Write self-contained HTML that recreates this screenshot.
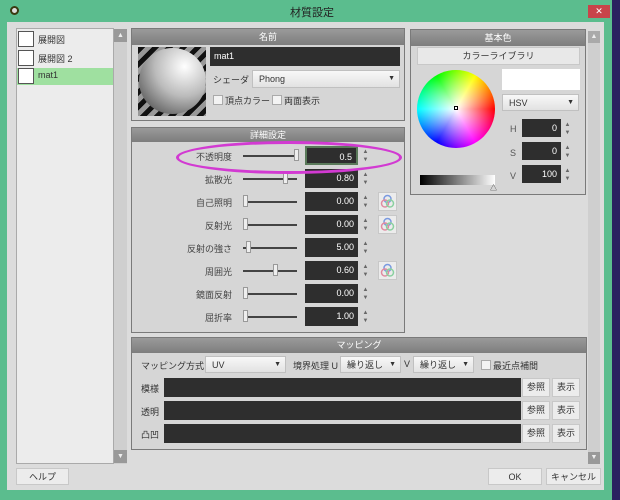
<!DOCTYPE html><html><head><meta charset="utf-8"><style>
*{box-sizing:border-box;margin:0;padding:0}
body{width:620px;height:500px;overflow:hidden;background:#5bbd8e;font-family:"Liberation Sans","Noto Sans CJK JP",sans-serif;font-size:9px;color:#333;position:relative}
.a{position:absolute}
.win{left:7px;top:22px;width:597px;height:468px;background:#dcdcdc}
.hdr{background:linear-gradient(#9a9a9a,#7d7d7d);color:#fff;text-align:center;height:16px;line-height:16px;font-size:9px}
.pan{background:#d6d6d6;border:1px solid #7a7a7a}
.dk{background:#2e2e2e;color:#fff;text-align:right;padding-right:4px;font-size:9px;line-height:18px}
.sl{height:2px;background:#444}
.th{width:5px;height:12px;background:#eee;border:1px solid #999}
.sp{color:#666;font-size:6px;line-height:8px;width:9px;text-align:center}
.btn{background:#ececec;border:1px solid #c8c8c8;text-align:center;line-height:16px}
.cb{width:10px;height:10px;background:#f3f3f3;border:1px solid #aaa}
.sel{background:linear-gradient(#f8f8f8,#e2e2e2);border:1px solid #c0c0c0;line-height:16px;padding-left:6px}
.sel:after{content:"▼";position:absolute;right:4px;font-size:7px;color:#333}
.lbl{text-align:right;width:90px;color:#444}
</style></head><body>
<div class="a" style="left:612px;top:0;width:8px;height:500px;background:#2a2060"></div>
<div class="a" style="left:10px;top:6px;width:9px;height:9px;border-radius:50%;background:#ddd;border:2px solid #3a3a10"></div>
<div class="a" style="left:290px;top:4px;font-size:11px;color:#222">材質設定</div>
<div class="a" style="left:588px;top:5px;width:22px;height:13px;background:#c8444a;color:#fff;text-align:center;line-height:13px;font-size:9px">✕</div>
<div class="a win"></div>
<div class="a" style="left:16px;top:28px;width:98px;height:436px;background:#ececec;border:1px solid #aaa"></div>
<div class="a" style="left:17px;top:68px;width:96px;height:17px;background:#9fe0a0"></div>
<div class="a" style="left:18px;top:31px;width:16px;height:16px;background:#fff;border:1px solid #555"></div>
<div class="a" style="left:38px;top:33px">展開図</div>
<div class="a" style="left:18px;top:50px;width:16px;height:16px;background:#fff;border:1px solid #555"></div>
<div class="a" style="left:38px;top:52px">展開図 2</div>
<div class="a" style="left:18px;top:68px;width:16px;height:16px;background:#fff;border:1px solid #555"></div>
<div class="a" style="left:38px;top:70px">mat1</div>
<div class="a" style="left:114px;top:29px;width:13px;height:435px;background:#cfcfcf"></div>
<div class="a" style="left:114px;top:29px;width:13px;height:13px;background:#999;color:#eee;font-size:7px;text-align:center;line-height:13px">▲</div>
<div class="a" style="left:114px;top:450px;width:13px;height:13px;background:#999;color:#eee;font-size:7px;text-align:center;line-height:13px">▼</div>
<div class="a pan" style="left:131px;top:28px;width:274px;height:93px"><div class="hdr">名前</div></div>
<div class="a" style="left:138px;top:47px;width:68px;height:69px;background:repeating-linear-gradient(135deg,#111 0 5px,#999 5px 10px)"></div>
<div class="a" style="left:139px;top:48px;width:67px;height:66px;border-radius:50%;background:radial-gradient(circle at 68% 28%,#fff,#bbb 45%,#444 95%)"></div>
<div class="a dk" style="left:210px;top:47px;width:190px;height:19px;text-align:left;padding-left:4px">mat1</div>
<div class="a" style="left:213px;top:73px">シェーダ</div>
<div class="a sel" style="left:252px;top:70px;width:148px;height:18px">Phong</div>
<div class="a cb" style="left:213px;top:95px"></div><div class="a" style="left:225px;top:94px">頂点カラー</div>
<div class="a cb" style="left:272px;top:95px"></div><div class="a" style="left:284px;top:94px">両面表示</div>
<div class="a pan" style="left:131px;top:127px;width:274px;height:206px"><div class="hdr" style="height:14px;line-height:14px">詳細設定</div></div>
<div id="rows"></div>
<div class="a pan" style="left:410px;top:29px;width:176px;height:166px"><div class="hdr">基本色</div></div>
<div class="a btn" style="left:417px;top:47px;width:163px;height:18px;background:#e8e8e8">カラーライブラリ</div>
<div class="a" style="left:417px;top:70px;width:78px;height:78px;border-radius:50%;background:radial-gradient(circle,#fff 0%,rgba(255,255,255,0) 70%),conic-gradient(from 90deg,#f00,#f0f,#00f,#0ff,#0f0,#ff0,#f00)"></div>
<div class="a" style="left:454px;top:106px;width:4px;height:4px;border:1px solid #000;background:#fff"></div>
<div class="a" style="left:502px;top:69px;width:78px;height:21px;background:#fff"></div>
<div class="a sel" style="left:502px;top:94px;width:77px;height:17px">HSV</div>
<div class="a" style="left:420px;top:175px;width:75px;height:10px;background:linear-gradient(90deg,#000,#fff)"></div>
<div class="a" style="left:490px;top:183px;font-size:7px">△</div>
<div class="a" style="left:510px;top:124px;color:#555">H</div><div class="a dk" style="left:522px;top:119px;width:39px;height:18px">0</div><div class="a sp" style="left:563px;top:121px">▲<br>▼</div>
<div class="a" style="left:510px;top:148px;color:#555">S</div><div class="a dk" style="left:522px;top:142px;width:39px;height:18px">0</div><div class="a sp" style="left:563px;top:144px">▲<br>▼</div>
<div class="a" style="left:510px;top:171px;color:#555">V</div><div class="a dk" style="left:522px;top:165px;width:39px;height:18px">100</div><div class="a sp" style="left:563px;top:167px">▲<br>▼</div>
<div class="a" style="left:588px;top:31px;width:12px;height:433px;background:#cfcfcf"></div>
<div class="a" style="left:588px;top:31px;width:12px;height:12px;background:#aaa;color:#eee;font-size:7px;text-align:center;line-height:12px">▲</div>
<div class="a" style="left:588px;top:452px;width:12px;height:12px;background:#999;color:#eee;font-size:7px;text-align:center;line-height:12px">▼</div>
<div class="a pan" style="left:131px;top:337px;width:456px;height:113px"><div class="hdr" style="height:15px;line-height:15px">マッピング</div></div>
<div class="a" style="left:141px;top:359px">マッピング方式</div>
<div class="a sel" style="left:205px;top:356px;width:81px;height:17px">UV</div>
<div class="a" style="left:293px;top:359px">境界処理 U</div>
<div class="a sel" style="left:340px;top:356px;width:61px;height:17px">繰り返し</div>
<div class="a" style="left:404px;top:359px">V</div>
<div class="a sel" style="left:413px;top:356px;width:61px;height:17px">繰り返し</div>
<div class="a cb" style="left:481px;top:360px"></div><div class="a" style="left:493px;top:359px">最近点補間</div>
<div class="a" style="left:141px;top:382px">模様</div><div class="a" style="left:164px;top:378px;width:357px;height:19px;background:#2e2e2e"></div>
<div class="a btn" style="left:522px;top:378px;width:28px;height:19px">参照</div><div class="a btn" style="left:552px;top:378px;width:28px;height:19px">表示</div>
<div class="a" style="left:141px;top:405px">透明</div><div class="a" style="left:164px;top:401px;width:357px;height:19px;background:#2e2e2e"></div>
<div class="a btn" style="left:522px;top:401px;width:28px;height:19px">参照</div><div class="a btn" style="left:552px;top:401px;width:28px;height:19px">表示</div>
<div class="a" style="left:141px;top:428px">凸凹</div><div class="a" style="left:164px;top:424px;width:357px;height:19px;background:#2e2e2e"></div>
<div class="a btn" style="left:522px;top:424px;width:28px;height:19px">参照</div><div class="a btn" style="left:552px;top:424px;width:28px;height:19px">表示</div>
<div class="a btn" style="left:16px;top:468px;width:53px;height:17px">ヘルプ</div>
<div class="a btn" style="left:488px;top:468px;width:54px;height:17px">OK</div>
<div class="a btn" style="left:546px;top:468px;width:55px;height:17px">キャンセル</div>
<script>
var R=[["不透明度",0.5,"0.5",0],["拡散光",0.8,"0.80",0],["自己照明",0,"0.00",1],["反射光",0,"0.00",1],["反射の強さ",0.05,"5.00",0],["周囲光",0.6,"0.60",1],["鏡面反射",0,"0.00",0],["屈折率",0,"1.00",0]];
var ic='<svg width="17" height="17" viewBox="0 0 17 17"><circle cx="8.5" cy="6" r="3.5" fill="none" stroke="#7a9ae0" stroke-width="1.5"/><circle cx="6" cy="10.5" r="3.5" fill="none" stroke="#e08aa0" stroke-width="1.5"/><circle cx="11" cy="10.5" r="3.5" fill="none" stroke="#8ad0a0" stroke-width="1.5"/></svg>';
var h="";R.forEach(function(r,i){var y=146+i*23;
h+='<div class="a lbl" style="left:142px;top:'+(y+4)+'px">'+r[0]+'</div>';
h+='<div class="a sl" style="left:243px;top:'+(y+9)+'px;width:54px"></div>';
var tx=i==0?294:243+Math.round(r[1]*50);
h+='<div class="a th" style="left:'+tx+'px;top:'+(y+3)+'px"></div>';
h+='<div class="a dk" style="left:305px;top:'+y+'px;width:53px;height:19px'+(i==0?';border:2px solid #5a7a5a':'')+'">'+r[2]+'</div>';
h+='<div class="a sp" style="left:361px;top:'+(y+2)+'px">▲<br>▼</div>';
if(r[3])h+='<div class="a btn" style="left:378px;top:'+y+'px;width:19px;height:19px;line-height:0;padding:0">'+ic+'</div>';});
document.getElementById("rows").innerHTML=h;
</script>
<div class="a" style="left:176px;top:141px;width:226px;height:33px;border:3px solid #d23ad2;border-radius:50%"></div>
</body></html>
